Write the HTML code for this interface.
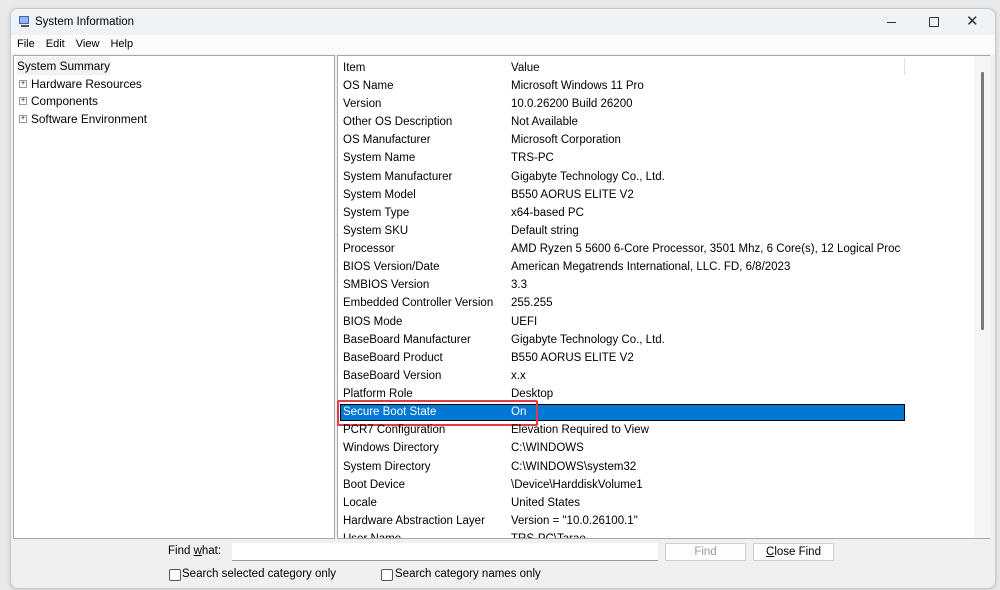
<!DOCTYPE html>
<html><head><style>
body{margin:0;width:1000px;height:590px;background:#e9e9e9;font-family:"Liberation Sans",sans-serif;font-size:12px;color:#000;position:relative;overflow:hidden}
.win{position:absolute;left:10px;top:8px;width:984px;height:579px;background:#f0f0f0;border:1px solid #c8c8c8;border-radius:8px;overflow:hidden;box-shadow:0 1px 4px rgba(0,0,0,.15)}
.title{position:absolute;left:0;top:0;width:100%;height:26px;background:#eef3f8}
.menu{position:absolute;left:0;top:26px;width:100%;height:19px;background:#fbfbfb}
.a{position:absolute;white-space:nowrap}
.pane{position:absolute;background:#fff;border:1px solid #a8a8a8}
.r{position:absolute;left:5px;height:18px;line-height:18px;white-space:nowrap}
.v{left:173px;width:390px;overflow:hidden}
.btn{position:absolute;height:16px;border:1px solid #d0d0d0;background:#fdfdfd;text-align:center;line-height:16px}
.cb{position:absolute;width:10px;height:10px;border:1px solid #555;border-radius:2px;background:#fff}
</style></head><body>
<div class="win">
<div class="title">
<svg class="a" style="left:7px;top:6px" width="13" height="13"><rect x="1" y="1" width="10" height="8" fill="#3a66b8"/><rect x="2" y="2" width="8" height="6" fill="#8fb4f0"/><rect x="3" y="10" width="8" height="2" fill="#555"/></svg>
<div class="a" style="left:24px;top:7px;font-size:11.5px">System Information</div>
<div class="a" style="left:876px;top:13px;width:9px;height:1px;background:#333"></div>
<div class="a" style="left:918px;top:8px;width:8px;height:8px;border:1px solid #333;border-radius:1px"></div>
<div class="a" style="left:955px;top:3px;font-size:15px;color:#333">✕</div>
</div>
<div class="menu"><div class="a" style="left:6px;top:3px;word-spacing:8px;font-size:11px">File Edit View Help</div></div>
<div class="pane" style="left:2px;top:46px;width:320px;height:482px">
<div class="r" style="left:3px;top:1px;background:#f2f2f2;font-size:11.8px">System Summary</div>
<div class="r" style="left:17px;top:19px;font-size:11.8px">Hardware Resources</div>
<div class="r" style="left:17px;top:36px;font-size:11.8px">Components</div>
<div class="r" style="left:17px;top:54px;font-size:11.8px">Software Environment</div>
<div class="a" style="left:5px;top:24px;width:6px;height:6px;border:1px solid #999;font-size:7px;line-height:6px;text-align:center">+</div>
<div class="a" style="left:5px;top:41px;width:6px;height:6px;border:1px solid #999;font-size:7px;line-height:6px;text-align:center">+</div>
<div class="a" style="left:5px;top:59px;width:6px;height:6px;border:1px solid #999;font-size:7px;line-height:6px;text-align:center">+</div>
</div>
<div class="pane" style="left:326px;top:46px;width:651px;height:482px;font-size:11.5px">
<div class="a" style="left:566px;top:2px;width:1px;height:17px;background:#e0e0e0"></div>
<div class="a" style="left:636px;top:0;width:16px;height:482px;background:#f5f5f5"></div>
<div class="a" style="left:643px;top:16px;width:3px;height:258px;background:#7a7a7a;border-radius:1px"></div>
<div class="a" style="left:2px;top:348px;width:563px;height:15px;background:#0078d4;border:1px solid #000"></div>
<div class="a" style="left:-1px;top:344px;width:197px;height:22px;border:2px solid #e03c45;border-radius:2px"></div>
<div id="rows"></div>
</div>
<div class="a" style="left:157px;top:536px;font-size:11.5px">Find <u>w</u>hat:</div>
<div class="a" style="left:221px;top:534px;width:426px;height:17px;background:#fff;border-bottom:1px solid #999"></div>
<div class="btn" style="left:654px;top:534px;width:79px;color:#999;font-size:11.5px">Find</div>
<div class="btn" style="left:742px;top:534px;width:79px;font-size:11.5px"><u>C</u>lose Find</div>
<div class="cb" style="left:158px;top:560px"></div><div class="a" style="left:171px;top:559px;font-size:11.5px">Search selected category only</div>
<div class="cb" style="left:370px;top:560px"></div><div class="a" style="left:384px;top:559px;font-size:11.5px">Search category names only</div>
</div>
<script>
var d=[["Item","Value"],["OS Name","Microsoft Windows 11 Pro"],["Version","10.0.26200 Build 26200"],["Other OS Description","Not Available"],["OS Manufacturer","Microsoft Corporation"],["System Name","TRS-PC"],["System Manufacturer","Gigabyte Technology Co., Ltd."],["System Model","B550 AORUS ELITE V2"],["System Type","x64-based PC"],["System SKU","Default string"],["Processor","AMD Ryzen 5 5600 6-Core Processor, 3501 Mhz, 6 Core(s), 12 Logical Proce..."],["BIOS Version/Date","American Megatrends International, LLC. FD, 6/8/2023"],["SMBIOS Version","3.3"],["Embedded Controller Version","255.255"],["BIOS Mode","UEFI"],["BaseBoard Manufacturer","Gigabyte Technology Co., Ltd."],["BaseBoard Product","B550 AORUS ELITE V2"],["BaseBoard Version","x.x"],["Platform Role","Desktop"],["Secure Boot State","On"],["PCR7 Configuration","Elevation Required to View"],["Windows Directory","C:\\WINDOWS"],["System Directory","C:\\WINDOWS\\system32"],["Boot Device","\\Device\\HarddiskVolume1"],["Locale","United States"],["Hardware Abstraction Layer","Version = \"10.0.26100.1\""],["User Name","TRS-PC\\Tarao"]];
var h="";d.forEach(function(r,i){var t=i==0?3:21+(i-1)*18.12;var c=i==19?"color:#fff;":"";
h+='<div class="r" style="'+c+'top:'+t+'px">'+r[0]+'</div><div class="r v" style="'+c+'top:'+t+'px">'+r[1]+'</div>';});
document.getElementById("rows").innerHTML=h;
</script>
<style>#rows{position:absolute;left:0;top:0;width:636px;height:482px;overflow:hidden}</style>
</body></html>
